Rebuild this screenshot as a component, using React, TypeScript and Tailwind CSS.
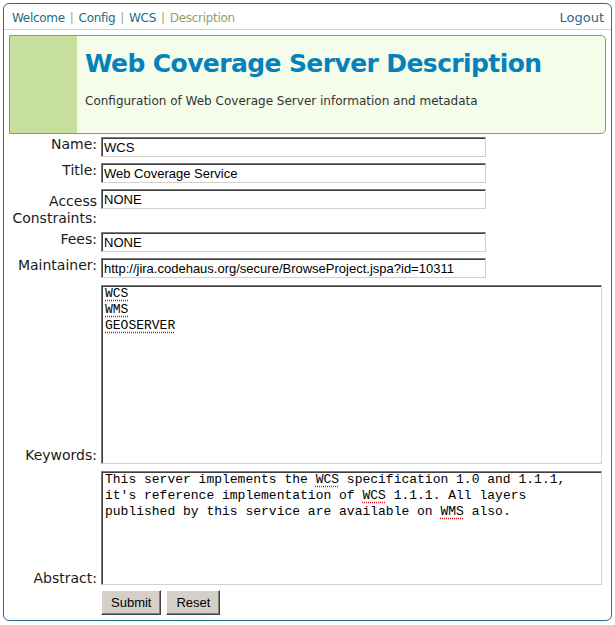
const links = ["Welcome", "Config", "WCS"];

function Misspelt({ children }: { children: React.ReactNode }) {
  return (
    <span className="underline decoration-dotted decoration-[#e01010] underline-offset-[3px]">{children}</span>
  );
}

const field =
  "h-[20px] w-[385px] border border-t-[#7a7a7a] border-l-[#7a7a7a] border-r-[#d4d0c8] border-b-[#d4d0c8] shadow-[inset_1px_1px_0_#404040] bg-white pl-[2px] font-['Liberation_Sans',Arial,sans-serif] text-[13px] text-black outline-none";

const area =
  "w-[501px] border border-t-[#7a7a7a] border-l-[#7a7a7a] border-r-[#d4d0c8] border-b-[#d4d0c8] shadow-[inset_1px_1px_0_#404040] bg-white pl-[3px] font-['Liberation_Mono','Courier_New',monospace] text-[13px] leading-[16px] text-black";

const button =
  "h-[25px] px-[9px] bg-[#d4d0c8] border border-t-white border-l-white border-r-[#404040] border-b-[#404040] shadow-[inset_-1px_-1px_0_#808080] font-['Liberation_Sans',Arial,sans-serif] text-[13px] leading-none text-black";

export default function App() {
  return (
    <div className="min-h-screen bg-white p-[3px] font-['DejaVu_Sans',Verdana,sans-serif]">
      <div className="flex h-[618px] w-[609px] flex-col rounded-[6px] border border-[#20708f]">
        {/* top nav */}
        <div className="flex h-[26px] justify-between border-b border-[#cadd9f] pl-[8px] pr-[7px] pt-[3px]">
          <div className="text-[12px] leading-[22px] tracking-[-0.3px]">
            {links.map((l) => (
              <span key={l}>
                <a className="text-[#236b86]">{l}</a>
                <span className="mx-[5px] text-[#9aab76]">|</span>
              </span>
            ))}
            <span className="text-[#8fa26b]">Description</span>
          </div>
          <a className="text-[13px] leading-[22px] text-[#236b86]">Logout</a>
        </div>

        {/* page header */}
        <div className="mx-[5px] mt-[5px] flex h-[99px] rounded-r-[5px] border border-[#7cad3c] bg-[#f4fcea]">
          <div className="w-[67px] shrink-0 bg-[#c7df9d]" />
          <div className="pl-[8px] pt-[13px]">
            <h1 className="text-[25px] font-bold leading-[30px] tracking-[-0.6px] text-[#0581bb]">
              Web Coverage Server Description
            </h1>
            <p className="mt-[14px] text-[12px] leading-[16px] text-[#333]">
              Configuration of Web Coverage Server information and metadata
            </p>
          </div>
        </div>

        {/* form */}
        <form className="flex flex-col text-[14px] text-[#1a1a1a]">
          <div className="mt-[3px] flex items-start">
            <label className="w-[93px] shrink-0 text-right leading-[14px]">Name:</label>
            <input className={"ml-[4px] " + field} readOnly defaultValue="WCS" />
          </div>
          <div className="mt-[6px] flex items-start">
            <label className="w-[93px] shrink-0 text-right leading-[14px]">Title:</label>
            <input className={"ml-[4px] " + field} readOnly defaultValue="Web Coverage Service" />
          </div>
          <div className="mt-[6px] flex items-start">
            <label className="w-[93px] shrink-0 pt-[4px] text-right leading-[17px]">Access Constraints:</label>
            <input className={"ml-[4px] " + field} readOnly defaultValue="NONE" />
          </div>
          <div className="mt-[5px] flex items-start">
            <label className="w-[93px] shrink-0 text-right leading-[14px]">Fees:</label>
            <input className={"ml-[4px] " + field} readOnly defaultValue="NONE" />
          </div>
          <div className="mt-[6px] flex items-start">
            <label className="w-[93px] shrink-0 text-right leading-[14px]">Maintainer:</label>
            <input
              className={"ml-[4px] " + field}
              readOnly
              defaultValue="http://jira.codehaus.org/secure/BrowseProject.jspa?id=10311"
            />
          </div>
          <div className="mt-[7px] flex items-end">
            <label className="w-[93px] shrink-0 text-right leading-[17px]">Keywords:</label>
            <div className={"ml-[4px] h-[179px] " + area}>
              <Misspelt>WCS</Misspelt>
              <br />
              <Misspelt>WMS</Misspelt>
              <br />
              <Misspelt>GEOSERVER</Misspelt>
            </div>
          </div>
          <div className="mt-[7px] flex items-end">
            <label className="mb-[-2px] w-[93px] shrink-0 text-right leading-[17px]">Abstract:</label>
            <div className={"ml-[4px] h-[114px] " + area}>
              This server implements the <Misspelt>WCS</Misspelt> specification 1.0 and 1.1.1,
              <br />
              it's reference implementation of <Misspelt>WCS</Misspelt> 1.1.1. All layers
              <br />
              published by this service are available on <Misspelt>WMS</Misspelt> also.
            </div>
          </div>
          <div className="ml-[97px] mt-[5px] flex gap-[5px]">
            <button type="button" className={button}>Submit</button>
            <button type="button" className={button}>Reset</button>
          </div>
        </form>
      </div>
    </div>
  );
}
